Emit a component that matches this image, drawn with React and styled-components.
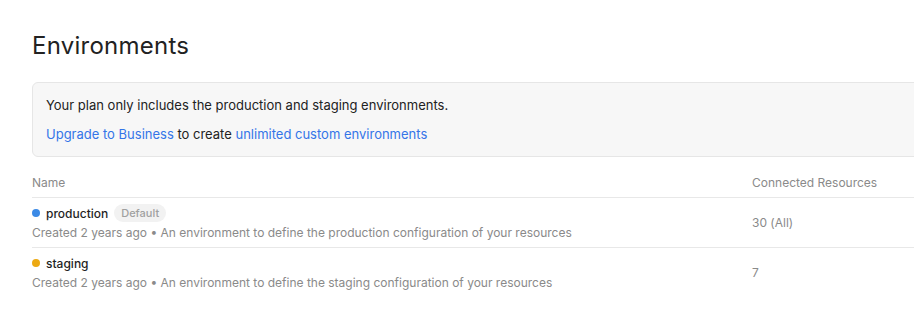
import React from "react"
import styled, { createGlobalStyle } from "styled-components"

const GlobalStyle = createGlobalStyle`
  body {
    margin: 0;
    background: #fff;
    font-family: Inter, "Noto Sans", sans-serif;
    color: #1f1f1f;
    overflow: hidden;
  }
`

const environments = [
  { name: "production", color: "#3b8ae6", isDefault: true, resources: "30 (All)" },
  { name: "staging", color: "#eca913", isDefault: false, resources: "7" },
]

const App = () => (
  <React.Fragment>
    <GlobalStyle />
    <Page>
      <Title>Environments</Title>
      <Notice>
        <NoticeText>Your plan only includes the production and staging environments.</NoticeText>
        <NoticeText>
          <Link>Upgrade to Business</Link> to create <Link>unlimited custom environments</Link>
        </NoticeText>
      </Notice>
      <Table>
        <HeadRow>
          <HeadCell>Name</HeadCell>
          <HeadCell>Connected Resources</HeadCell>
        </HeadRow>
        {environments.map(env => (
          <Row key={env.name}>
            <div>
              <NameLine>
                <Dot color={env.color} />
                <EnvName>{env.name}</EnvName>
                {env.isDefault && <Badge>Default</Badge>}
              </NameLine>
              <Description>
                Created 2 years ago • An environment to define the {env.name} configuration of your resources
              </Description>
            </div>
            <Count>{env.resources}</Count>
          </Row>
        ))}
      </Table>
    </Page>
  </React.Fragment>
)

export default App

const Page = styled.div`
  width: 920px;
  padding: 30px 0 0 32px;
`

const Title = styled.h1`
  margin: 0 0 20px;
  font-size: 24px;
  font-weight: 400;
  line-height: 32px;
  letter-spacing: 0.25px;
  color: #222;
`

const Notice = styled.div`
  background: #f7f7f7;
  border: 1px solid #e6e6e6;
  border-radius: 6px;
  padding: 12px 13px 12px;
  display: flex;
  flex-direction: column;
  gap: 9px;
`

const NoticeText = styled.p`
  margin: 0;
  font-size: 13px;
  line-height: 20px;
  color: #222;
`

const Link = styled.a`
  color: #3475e8;
  cursor: pointer;
`

const Table = styled.div`
  margin-top: 16px;
`

const HeadRow = styled.div`
  display: grid;
  grid-template-columns: 720px 1fr;
  height: 24px;
  border-bottom: 1px solid #e8e8e8;
`

const HeadCell = styled.div`
  font-size: 12px;
  line-height: 20px;
  color: #8a8a8a;
`

const Row = styled.div`
  display: grid;
  grid-template-columns: 720px 1fr;
  align-items: center;
  padding: 5px 0 5px;
  border-bottom: 1px solid #e8e8e8;
  &:last-child {
    border-bottom: none;
  }
`

const NameLine = styled.div`
  display: flex;
  align-items: center;
  height: 20px;
`

const Dot = styled.span`
  width: 8px;
  height: 8px;
  border-radius: 50%;
  background: ${props => props.color};
  margin-right: 6px;
`

const EnvName = styled.span`
  font-size: 12px;
  font-weight: 500;
  color: #1f1f1f;
`

const Badge = styled.span`
  margin-left: 6px;
  padding: 0 7px;
  height: 18px;
  line-height: 18px;
  border-radius: 9px;
  background: #f2f2f2;
  font-size: 11px;
  font-weight: 500;
  color: #a0a0a0;
`

const Description = styled.div`
  font-size: 12px;
  line-height: 19px;
  color: #8a8a8a;
`

const Count = styled.div`
  font-size: 12px;
  color: #8a8a8a;
`
